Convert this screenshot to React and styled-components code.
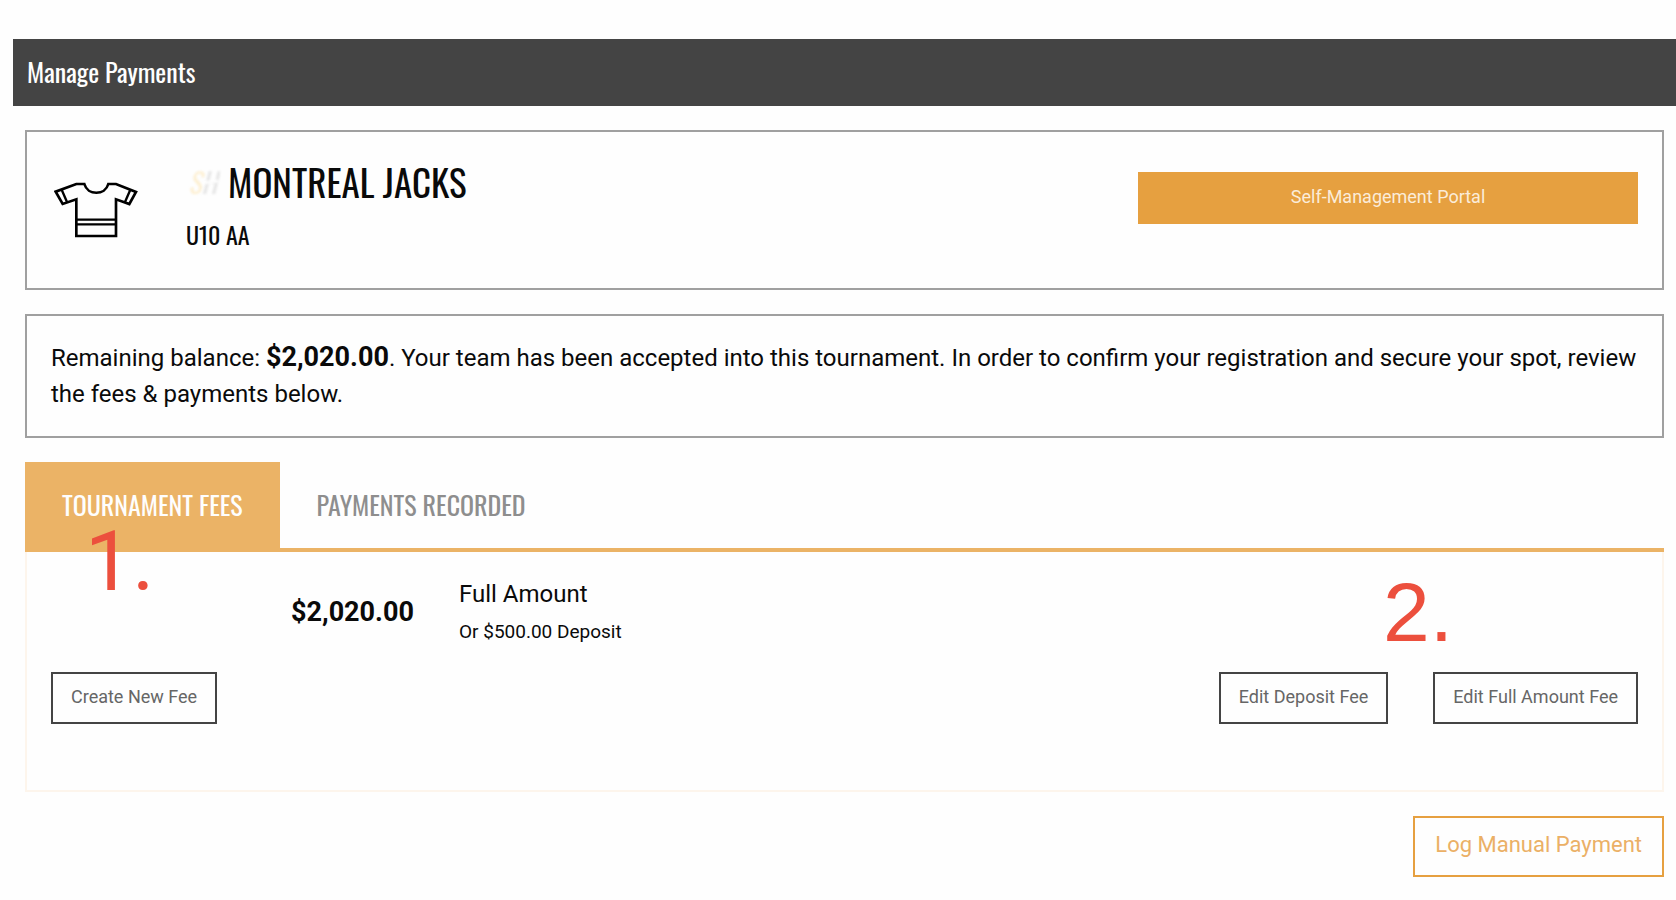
import React, {useState} from 'react';
import styled, {createGlobalStyle} from 'styled-components';

const GlobalStyle = createGlobalStyle`
  * {
    box-sizing: border-box;
  }

  body {
    margin: 0;
    background: #fefefe;
    color: #0a0a0a;
    font-family: Roboto, 'Liberation Sans', sans-serif;
    font-size: 24px;
    line-height: 36px;
  }
`;

const headingFont = `Oswald, 'Roboto Condensed', 'Liberation Sans Narrow', sans-serif`;

const Page = styled.div`
  padding: 39px 0 24px 13px;
`;

const TitleBar = styled.h1`
  margin: 0;
  padding: 15px 14px 16px;
  background: #444;
  color: #fefefe;
  font-family: ${headingFont};
  font-size: 26px;
  font-weight: 400;
  line-height: 36px;
`;

const Content = styled.main`
  display: flex;
  flex-direction: column;
  gap: 24px;
  padding: 24px 12px 0;
`;

const Card = styled.section`
  border: 2px solid #a0a0a0;
  padding: 24px;
`;

const TeamCard = styled(Card)`
  display: flex;
  align-items: flex-start;
  min-height: 160px;
`;

const Jersey = styled.svg`
  flex: none;
  width: 84px;
  height: 56px;
  margin: 26px 48px 0 3px;
`;

const TeamInfo = styled.div`
  flex: 1;
`;

const TeamName = styled.h2`
  display: flex;
  align-items: center;
  gap: 8px;
  margin: 0;
  font-family: ${headingFont};
  font-size: 37px;
  font-weight: 400;
  line-height: 52px;
`;

const TeamLogo = styled.svg`
  width: 34px;
  height: 40px;
  filter: blur(1px);
`;

const Division = styled.p`
  margin: 6px 0 0;
  font-family: ${headingFont};
  font-size: 24px;
  line-height: 40px;
`;

const Button = styled.button`
  border: 2px solid #444;
  padding: 13px 18px 15px;
  background: transparent;
  color: #666;
  font: 18px/20px Roboto, 'Liberation Sans', sans-serif;
  cursor: pointer;
`;

const PortalButton = styled(Button)`
  width: 31.5%;
  margin-top: 16px;
  border-color: #e6a040;
  background: #e6a040;
  color: #fbecd9;
`;

const LogButton = styled(Button)`
  align-self: flex-end;
  padding: 15px 20px 18px;
  border-color: #e6a040;
  color: #ebb066;
  font-size: 22px;
  line-height: 24px;
`;

const Balance = styled.p`
  margin: 0;
`;

const Amount = styled.strong`
  font-size: 27px;
  font-weight: 700;
  line-height: 32px;
`;

const TabList = styled.div`
  display: flex;
  border-bottom: 4px solid #ebb366;
`;

const Tab = styled.button`
  position: relative;
  border: 0;
  padding: 23px 37px;
  background: ${props => (props.$active ? '#ebb366' : 'transparent')};
  color: ${props => (props.$active ? '#fefefe' : '#8e8e8e')};
  font-family: ${headingFont};
  font-size: 26px;
  line-height: 40px;
  text-transform: uppercase;
  cursor: pointer;
`;

const Panel = styled.div`
  position: relative;
  min-height: 240px;
  border: 2px solid #fdf5ec;
  border-top: 0;
  padding: 24px 24px 66px;
`;

const Fee = styled.div`
  display: grid;
  grid-template-columns: 168px 1fr;
  padding-left: 240px;

  ${Amount} {
    padding-top: 20px;
  }
`;

const FeeText = styled.div`
  display: flex;
  flex-direction: column;
`;

const Deposit = styled.small`
  font-size: 19px;
  line-height: 40px;
`;

const Actions = styled.div`
  display: flex;
  gap: 45px;
  margin-top: 20px;

  button:first-child {
    margin-right: auto;
  }
`;

const Marker = styled.span`
  position: absolute;
  z-index: 1;
  color: #ec4f3d;
  font: 84px/84px 'Liberation Sans', sans-serif;
  pointer-events: none;
`;

const TabMarker = styled(Marker)`
  top: 58px;
  left: 60px;
  font-family: Roboto, sans-serif;
`;

const PanelMarker = styled(Marker)`
  top: 18px;
  right: 209px;
`;

const JerseyIcon = () => (
  <Jersey viewBox="27 36 252 168" fill="none" stroke="#000" strokeWidth="8" aria-hidden="true">
    <path d="M94 88V198H213V88L253 102L273 66L213 42H190C180 77 128 77 118 42H94L32 65L53 102L94 88Z" />
    <path d="M50 59L66 96M256 59L240 96M94 149H213M94 163H213" strokeWidth="7" />
  </Jersey>
);

const LogoMark = () => (
  <TeamLogo viewBox="0 0 34 40" aria-hidden="true">
    <text x="2" y="32" fontFamily="Oswald, sans-serif" fontSize="28" fontStyle="italic">
      <tspan fill="#fdf0d4">S</tspan>
      <tspan fill="#e6e6e6">H</tspan>
    </text>
    <path d="M16 21L32 19" stroke="#fefefe" strokeWidth="3" />
  </TeamLogo>
);

const tabs = ['Tournament Fees', 'Payments Recorded'];

const App = () => {
  const [active, setActive] = useState(0);

  return (
    <>
      <GlobalStyle />
      <Page>
        <TitleBar>Manage Payments</TitleBar>
        <Content>
          <TeamCard>
            <JerseyIcon />
            <TeamInfo>
              <TeamName>
                <LogoMark />
                MONTREAL JACKS
              </TeamName>
              <Division>U10 AA</Division>
            </TeamInfo>
            <PortalButton type="button">Self-Management Portal</PortalButton>
          </TeamCard>
          <Card>
            <Balance>
              Remaining balance: <Amount>$2,020.00</Amount>. Your team has been accepted into this tournament. In order
              to confirm your registration and secure your spot, review the fees &amp; payments below.
            </Balance>
          </Card>
          <section>
            <TabList role="tablist">
              {tabs.map((label, index) => (
                <Tab
                  key={label}
                  type="button"
                  role="tab"
                  aria-selected={active === index}
                  $active={active === index}
                  onClick={() => setActive(index)}
                >
                  {label}
                  {index === 0 && <TabMarker>1.</TabMarker>}
                </Tab>
              ))}
            </TabList>
            <Panel role="tabpanel">
              <Fee>
                <Amount>$2,020.00</Amount>
                <FeeText>
                  <span>Full Amount</span>
                  <Deposit>Or $500.00 Deposit</Deposit>
                </FeeText>
              </Fee>
              <Actions>
                <Button type="button">Create New Fee</Button>
                <Button type="button">Edit Deposit Fee</Button>
                <Button type="button">Edit Full Amount Fee</Button>
              </Actions>
              <PanelMarker>2.</PanelMarker>
            </Panel>
          </section>
          <LogButton type="button">Log Manual Payment</LogButton>
        </Content>
      </Page>
    </>
  );
};

export default App;
